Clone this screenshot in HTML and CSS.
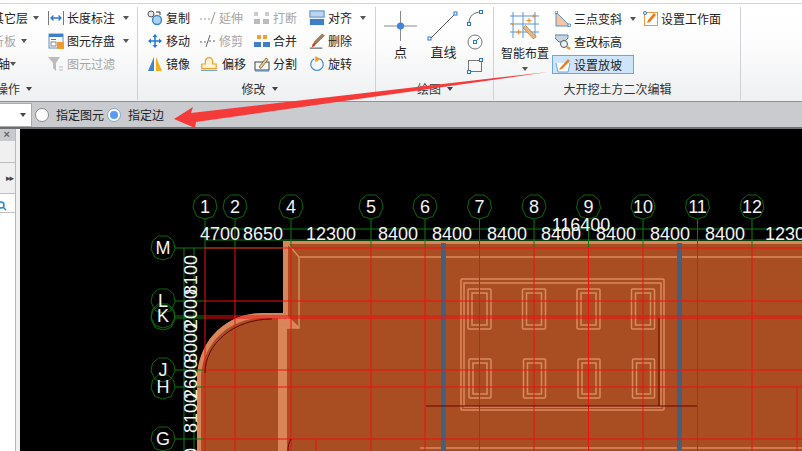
FILE: index.html
```html
<!DOCTYPE html>
<html lang="zh">
<head>
<meta charset="utf-8">
<title>大开挖土方二次编辑</title>
<link rel="stylesheet" href="styles.css">
</head>
<body>
<div class="app">
  <div class="ribbon">
    <section class="group g1">
      <div class="body">
        <div class="col cola">
          <div class="tool"><span>其它层</span><i class="caret"></i></div>
          <div class="tool off"><span>析板</span><i class="caret"></i></div>
          <div class="tool shaft"><span>轴</span><i class="caret"></i></div>
        </div>
        <div class="col colb">
          <div class="tool"><svg class="ic" viewBox="0 0 16 16"><path d="M.5 1v14M15.5 1v14" stroke="#777" fill="none"/><path d="M3 8h10M5.500 5.500 3 8l2.500 2.500M10.500 5.500 13 8l-2.500 2.500" stroke="#2a78c8" stroke-width="1.300" fill="none"/></svg><span>长度标注</span><i class="caret"></i></div>
          <div class="tool"><svg class="ic" viewBox="0 0 16 16"><rect x="1" y="1" width="14" height="14" fill="#fff" stroke="#5a8fc8"/><rect x="1" y="1" width="14" height="3" fill="#3f7fc4"/><rect x="3" y="6" width="5" height="1" fill="#3f7fc4"/><rect x="3" y="9" width="5" height="4" fill="none" stroke="#888"/><rect x="9" y="9" width="7" height="7" fill="#f09a28"/></svg><span>图元存盘</span><i class="caret"></i></div>
          <div class="tool off"><svg class="ic" viewBox="0 0 16 16"><path d="M0 1h12L8 7v8L5 12V7z" fill="#bcbcbc"/><path d="M11 11h4M11 14h4" stroke="#bbb"/></svg><span>图元过滤</span></div>
        </div>
      </div>
      <div class="foot foot-end"><span>操作</span><i class="caret dark"></i></div>
    </section>

    <section class="group g2">
      <div class="body grid4">
        <div class="tool"><svg class="ic" viewBox="0 0 16 16"><circle cx="4" cy="4" r="3" fill="#e8e8e8" stroke="#555"/><circle cx="10" cy="10" r="4.500" fill="#a9d3ee" stroke="#3d86c6" stroke-width="1.400"/><path d="M9 2h4v3" stroke="#333" fill="none"/></svg><span>复制</span></div>
        <div class="tool off"><svg class="ic" viewBox="0 0 16 16"><path d="M0 9h2M4 9h2M8 9h2" stroke="#999"/><path d="M11 14 15 2" stroke="#999"/></svg><span>延伸</span></div>
        <div class="tool off"><svg class="ic" viewBox="0 0 16 16"><rect x="0" y="9" width="6" height="5" fill="#bbb"/><rect x="9" y="9" width="6" height="5" fill="#bbb"/><rect x="0" y="2" width="4" height="4" fill="#ccc"/><rect x="11" y="2" width="4" height="4" fill="#ccc"/></svg><span>打断</span></div>
        <div class="tool"><svg class="ic big" viewBox="0 0 18 18"><rect x="1" y="1" width="16" height="7" fill="#bcd6f2" stroke="#3f7fc4"/><rect x="1" y="10" width="16" height="7" fill="#3f7fc4"/></svg><span>对齐</span><i class="caret"></i></div>

        <div class="tool"><svg class="ic" viewBox="0 0 16 16"><path d="M8 1 5.500 4h5zM8 15l-2.500-3h5zM1 8l3-2.500v5zM15 8l-3-2.500v5z" fill="#1f78d1"/><path d="M8 4v8M4 8h8" stroke="#1f78d1" stroke-width="1.500"/></svg><span>移动</span></div>
        <div class="tool off"><svg class="ic" viewBox="0 0 16 16"><path d="M0 9h2M4 9h2M9 8h2M13 8h2" stroke="#666"/><path d="M6 14 10 2" stroke="#666"/></svg><span>修剪</span></div>
        <div class="tool"><svg class="ic" viewBox="0 0 16 16"><rect x="0" y="9" width="7" height="5" fill="#3f7fc4"/><rect x="9" y="9" width="7" height="5" fill="#3f7fc4"/><rect x="3" y="2" width="4" height="4" fill="#f2a12e"/><rect x="9" y="2" width="4" height="4" fill="#f2a12e"/></svg><span>合并</span></div>
        <div class="tool"><svg class="ic big" viewBox="0 0 18 18"><path d="M6 10 15 1l2 2-9 9z" fill="#a9825c" stroke="#5b4a3a" stroke-width=".7"/><path d="M6 10l2 2-2 3-3 1 1-3z" fill="#c0451f"/><path d="M1 17h14" stroke="#333"/></svg><span>删除</span></div>

        <div class="tool"><svg class="ic" viewBox="0 0 16 16"><path d="M7 1v14H1z" fill="#3f86cf"/><path d="M9 1v14h6z" fill="#f2b01e"/></svg><span>镜像</span></div>
        <div class="tool"><svg class="ic wide" viewBox="0 0 20 16"><path d="M2 13V8h4V5a4 4 0 0 1 8 0v3h4v5z" fill="#fff3dc" stroke="#eda21f" stroke-width="1.300"/><path d="M1 15h18" stroke="#3f86cf"/></svg><span>偏移</span></div>
        <div class="tool"><svg class="ic" viewBox="0 0 16 16"><rect x="1" y="6" width="14" height="8" fill="none" stroke="#444"/><path d="M5 11 12 2l2 1.500L7 12.500z" fill="#f3c66b" stroke="#555" stroke-width=".7"/><path d="M1 15h14" stroke="#3f86cf"/></svg><span>分割</span></div>
        <div class="tool"><svg class="ic big" viewBox="0 0 18 18"><path d="M6 3a7 7 0 1 0 6 0" fill="none" stroke="#3f86cf" stroke-width="1.300"/><path d="M7 0v7l6-3.500z" fill="#f09a28"/></svg><span>旋转</span></div>
      </div>
      <div class="foot foot-g2"><span>修改</span><i class="caret dark"></i></div>
    </section>

    <section class="group g3">
      <div class="body draw">
        <div class="bigtool pt"><svg class="draw-ic" viewBox="0 0 33 30"><path d="M16.500 0v30M0 15h33" stroke="#8a8a8a"/><circle cx="16.500" cy="15" r="3.600" fill="#3f86d8"/></svg><span>点</span></div>
        <div class="bigtool ln"><svg class="draw-ic" viewBox="0 0 33 30"><path d="M3 28 28 3" stroke="#555" fill="none"/><rect x="1" y="26" width="3" height="3" fill="#fff" stroke="#2a78c8"/><rect x="27" y="1" width="3" height="3" fill="#fff" stroke="#2a78c8"/></svg><span>直线</span></div>
        <div class="mini">
          <svg class="mini-ic" viewBox="0 0 16 16"><path d="M2 13C2 6 7 2 14 2" fill="none" stroke="#666"/><rect x="0.500" y="12.500" width="3" height="3" fill="#fff" stroke="#2a78c8"/><rect x="12.500" y="0.500" width="3" height="3" fill="#fff" stroke="#2a78c8"/></svg>
          <svg class="mini-ic" viewBox="0 0 16 16"><circle cx="8" cy="8" r="7" fill="none" stroke="#777"/><path d="M8 8l4-4" stroke="#666"/><rect x="6.500" y="6.500" width="3" height="3" fill="#fff" stroke="#2a78c8"/></svg>
          <svg class="mini-ic" viewBox="0 0 16 16"><rect x="1.500" y="2.500" width="13" height="11" fill="none" stroke="#777"/><rect x="0.500" y="12.500" width="3" height="3" fill="#fff" stroke="#2a78c8"/><rect x="12.500" y="0.500" width="3" height="3" fill="#fff" stroke="#2a78c8"/></svg>
        </div>
      </div>
      <div class="foot"><span>绘图</span><i class="caret dark"></i></div>
    </section>

    <section class="group g4">
      <div class="body smart">
        <div class="bigtool sm"><svg class="smart-ic" viewBox="0 0 30 30"><path d="M3 1v26M13 1v26M25 1v26M0 5h29M0 13h29M0 21h29" stroke="#5a98d8" fill="none"/><path d="M1 12l3 3M6 21h5M8.500 18.500v5M19 7v5M16.500 9.500h5M24 3v4M22 5h4" stroke="#ee8a2c" fill="none"/><path d="M13 17l2.500-2.500L26 25.500 23.500 28z" fill="#e9b77e" stroke="#a8713f" stroke-width=".7"/></svg><span>智能布置</span><i class="caret"></i></div>
        <div class="col colc">
          <div class="tool tp"><svg class="ic" viewBox="0 0 16 16"><path d="M1 1v14h14z" fill="#f6c6a0" stroke="#5a8fc8"/><rect x="0" y="0" width="2.500" height="2.500" fill="#fff" stroke="#2a78c8" stroke-width=".7"/><rect x="13" y="13" width="2.500" height="2.500" fill="#fff" stroke="#2a78c8" stroke-width=".7"/></svg><span>三点变斜</span><i class="caret"></i></div>
          <div class="tool tp"><svg class="ic" viewBox="0 0 16 16"><path d="M0 1h13v3L9 8H4L0 4z" fill="#c6d3e2" stroke="#5a80a8"/><circle cx="9" cy="10" r="3.500" fill="#e8f2fb" stroke="#555"/><path d="M12 13l3 2" stroke="#f09a28" stroke-width="2.500"/></svg><span>查改标高</span></div>
          <div class="tool tp active"><svg class="ic" viewBox="0 0 16 16"><path d="M1 6l2 9h10l2-9" fill="#fff" stroke="#6ea6d8"/><path d="M5 11l8-9 2 2-8 8-3 1z" fill="#ee7d22"/></svg><span>设置放坡</span></div>
        </div>
        <div class="col cold">
          <div class="tool"><svg class="ic" viewBox="0 0 16 16"><rect x="1.500" y="1.500" width="13" height="13" fill="#fff" stroke="#e99a3a"/><path d="M4 12l1-3 6-7 2 2-6 7z" fill="#ee7d22"/><circle cx="2" cy="2" r="1.500" fill="#fff" stroke="#2a78c8"/></svg><span>设置工作面</span></div>
        </div>
      </div>
      <div class="foot"><span>大开挖土方二次编辑</span></div>
    </section>
  </div>

  <div class="options">
    <div class="combo"><i class="caret dark"></i></div>
    <label class="radio"><i class="dot"></i><span>指定图元</span></label>
    <label class="radio on"><i class="dot"></i><span>指定边</span></label>
  </div>

  <div class="main">
    <aside class="side">
      <div class="side-panel">
        <div class="s-head">×</div>
        <div class="s-a"></div>
        <div class="s-b">▸▸</div>
        <div class="s-c"><svg class="s-search" viewBox="0 0 10 10"><circle cx="3" cy="4" r="3" fill="none" stroke="#2a86c8" stroke-width="1.500"/><path d="M5 6l3 3" stroke="#2a86c8" stroke-width="1.500"/></svg></div>
        <div class="s-d"></div>
      </div>
    </aside>
    <svg class="canvas" viewBox="20 129 782 322">
      <defs>
        <polygon id="bubble" points="-4.500,-12 4.500,-12 10.500,-7 12,1 8,9.500 0,12 -8,9.500 -12,1 -10.500,-7"/>
        <g id="pile1" class="lite">
          <rect x="468" y="289" width="23" height="40" rx="1"/>
          <rect x="472" y="293" width="15" height="32"/>
        </g>
        <g id="pile2" class="lite">
          <rect x="469" y="359" width="22" height="39" rx="1"/>
          <rect x="473" y="363" width="14" height="31"/>
        </g>
      </defs>

      <path class="soil" d="M283 241H802V451H197V380C197 342 225 313 263 313H283Z"/>
      <path class="band" d="M197 451V380C197 342 225 313 263 313H283V241H802V244H288V317L299 328H287V451H278V318H263C228 318 201 345 201 380V451Z"/>
      <g class="lite">
        <path d="M288 244 299 257V328H283M299 257H802M288 317 299 328M420 448H802"/>
        <rect x="461" y="279" width="203" height="131" rx="1"/>
        <rect x="464" y="283" width="197" height="124"/>
      </g>
      <use href="#pile1"/><use href="#pile1" x="54.500"/><use href="#pile1" x="109"/><use href="#pile1" x="163.500"/>
      <use href="#pile2"/><use href="#pile2" x="54.500"/><use href="#pile2" x="109"/><use href="#pile2" x="163.500"/>
      <rect class="strip" x="441" y="243" width="5" height="208"/>
      <rect class="strip" x="677" y="243" width="5" height="208"/>

      <path class="axis" d="M205 219V248M235 219V248M291 219V248M371 219V248M425 219V248M479.500 219V248M534 219V248M588.500 219V248M643 219V248M697.500 219V248M752 219V248M205 229H802M205 240H802M175 248H283M175 301H205M175 316H205M175 318H205M175 370H205M175 387H205M175 439H205M184 248V451M194 248V451"/>
      <path class="grid" d="M205 248V451M235 248V451M291 248V451M371 248V451M425 248V451M479.500 248V451M534 248V451M588.500 248V451M643 248V451M697.500 248V451M752 248V451M205 248H802M205 301H802M205 316H802M205 318H802M205 370H802M205 387H802M205 439H802M797 387V451M316 439V451"/>
      <path class="cut" d="M426 406H697M659 318V406M272 319C232 319 205 345 205 373M288 451C288 446 289 442 291 439"/>

      <g class="ring">
        <use href="#bubble" x="205" y="207"/><use href="#bubble" x="235" y="207"/><use href="#bubble" x="291" y="207"/><use href="#bubble" x="371" y="207"/><use href="#bubble" x="425" y="207"/><use href="#bubble" x="479.500" y="207"/><use href="#bubble" x="534" y="207"/><use href="#bubble" x="588.500" y="207"/><use href="#bubble" x="643" y="207"/><use href="#bubble" x="697.500" y="207"/><use href="#bubble" x="752" y="207"/>
        <use href="#bubble" x="163" y="248"/><use href="#bubble" x="163" y="301"/><use href="#bubble" x="163" y="316"/><use href="#bubble" x="163" y="318"/><use href="#bubble" x="163" y="370"/><use href="#bubble" x="163" y="387"/><use href="#bubble" x="163" y="439"/>
      </g>
      <g class="lab">
        <text x="205" y="213">1</text><text x="235" y="213">2</text><text x="291" y="213">4</text><text x="371" y="213">5</text><text x="425" y="213">6</text><text x="479.500" y="213">7</text><text x="534" y="213">8</text><text x="588.500" y="213">9</text><text x="643" y="213">10</text><text x="697.500" y="213">11</text><text x="752" y="213">12</text>
        <text x="163" y="254">M</text><text x="163" y="307">L</text><text x="163" y="322">K</text><text x="163" y="376">J</text><text x="163" y="393">H</text><text x="163" y="445">G</text>
        <text x="220" y="240">4700</text><text x="263" y="240">8650</text><text x="331" y="240">12300</text><text x="398" y="240">8400</text><text x="452" y="240">8400</text><text x="507" y="240">8400</text><text x="561" y="240">8400</text><text x="616" y="240">8400</text><text x="670" y="240">8400</text><text x="725" y="240">8400</text><text x="790" y="240">12300</text>
        <text x="581" y="231">116400</text>
        <text transform="translate(197 275) rotate(-90)">8100</text>
        <text transform="translate(197 309) rotate(-90)">2000</text>
        <text transform="translate(197 343) rotate(-90)">8000</text>
        <text transform="translate(197 379) rotate(-90)">2600</text>
        <text transform="translate(197 413) rotate(-90)">8100</text>
        <text transform="translate(197 468) rotate(-90)">8100</text>
      </g>
    </svg>
  </div>

  <svg class="arrow" viewBox="0 0 802 451"><path d="M174 119 193 107 191 113 548 72 196 122 195 128Z"/></svg>
</div>
</body>
</html>
```
FILE: styles.css
```css
* { box-sizing: border-box; }
html, body { margin: 0; padding: 0; }
body { width: 802px; height: 451px; overflow: hidden; background: #000; font: 12px/16px "Noto Sans CJK SC", "Liberation Sans", sans-serif; color: #222; }
.app { position: relative; width: 802px; height: 451px; display: flex; flex-direction: column; overflow: hidden; }

.ribbon { height: 102px; flex: none; display: flex; padding-top: 3px; background: linear-gradient(#fff 0, #fff 3px, #fdfdfd 40%, #eef0f1 100%); border-bottom: 1px solid #8e9094; }
.group { height: 98px; padding-top: 1px; border-top: 1px solid #d4d4d4; display: flex; flex-direction: column; overflow: hidden; position: relative; flex: none; }
.group::after { content: ""; position: absolute; right: 0; top: 3px; bottom: 1px; width: 1px; background: #cfd2d4; }
.g1 { width: 138px; }
.g2 { width: 238px; }
.g3 { width: 118px; }
.g4 { width: 247px; }
.ribbon::after { content: ""; flex: 1; border-top: 1px solid #d4d4d4; }

.body { height: 76px; padding-top: 1px; display: flex; }
.foot { flex: 1; display: flex; align-items: center; justify-content: center; gap: 6px; padding-bottom: 4px; color: #333; }
.foot-end { justify-content: flex-start; margin-left: -4px; }
.foot-g2 { padding-left: 5px; }

.caret { display: inline-block; width: 0; height: 0; border: 3.500px solid transparent; border-top: 4px solid #555; border-bottom: 0; flex: none; }
.caret.dark { border-top-color: #444; }

.col { display: flex; flex-direction: column; }
.tool { height: 23px; display: flex; align-items: center; gap: 3px; white-space: nowrap; flex: none; }
.tool .caret { margin-left: 5px; }
.off { color: #a6a6a6; }
.ic { width: 16px; height: 16px; flex: none; }
.ic.big { width: 16px; height: 18px; }
.ic.wide { width: 18px; height: 16px; margin-right: 1px; }

.g1 .body { justify-content: flex-start; }
.cola { width: 48px; margin-left: -8px; margin-right: 8px; flex: none; }
.cola .tool { gap: 0; }
.cola .shaft { padding-left: 6px; }
.cola .shaft .caret { margin-left: 0; }
.colb .tool { gap: 3px; }

.grid4 { display: grid; grid-template-columns: 53px 54px 55px 60px; grid-auto-rows: 23px; padding-left: 9px; }

.draw { position: relative; padding-left: 8px; padding-top: 6px; }
.bigtool { display: flex; flex-direction: column; align-items: center; flex: none; }
.pt { width: 33px; }
.ln { width: 33px; margin-left: 10px; }
.draw-ic { width: 33px; height: 30px; display: block; margin-bottom: 2px; }
.bigtool span { font-size: 13px; line-height: 18px; color: #222; }
.mini { display: flex; flex-direction: column; gap: 8px; margin-left: 7px; margin-top: -1px; }
.mini-ic { width: 16px; height: 16px; display: block; }

.smart { padding-top: 2px; }
.sm { width: 58px; padding-left: 4px; padding-top: 4px; }
.smart-ic { width: 30px; height: 30px; display: block; margin-bottom: 4px; }
.sm span { font-size: 12px; line-height: 16px; }
.sm .caret { margin-top: 6px; }
.colc { width: 91px; }
.tp { padding-left: 3px; width: 82px; }
.tp.active { height: 19px; margin: 2px 0; background: #cde4fb; border: 1px solid #6ea6e0; padding-left: 2px; }
.cold { width: 90px; }
.cold .tool { gap: 2px; }

.options { height: 27px; flex: none; display: flex; align-items: center; background: #c9cbce; border-bottom: 2px solid #6e7074; padding-top: 1px; color: #222; }
.combo { width: 32px; height: 24px; background: #fff; border: 1px solid #a9abae; border-left: 0; display: flex; align-items: center; justify-content: flex-end; padding-right: 5px; flex: none; }
.radio { display: flex; align-items: center; gap: 7px; margin-left: 3px; }
.radio span { width: 48px; }
.dot { width: 14px; height: 14px; border-radius: 50%; background: #fff; border: 1px solid #8a8a8a; display: flex; align-items: center; justify-content: center; flex: none; }
.radio.on .dot { border-color: #7fa7d6; }
.radio.on .dot::after { content: ""; width: 8px; height: 8px; border-radius: 50%; background: #5a9cf0; }

.main { flex: 1; min-height: 0; display: flex; background: #000; }
.side { width: 20px; flex: none; background: #f0f0f0; }
.side-panel { width: 16px; height: 100%; border-right: 1px solid #b8b8b8; display: flex; flex-direction: column; background: #fff; }
.s-head { height: 12px; background: #c8cacd; color: #666; font: 700 11px/11px "Liberation Sans", sans-serif; text-align: right; padding-right: 5px; }
.s-a { height: 22px; background: #f0f0f0; border-bottom: 1px solid #c0c0c0; }
.s-b { height: 31px; background: #f0f0f0; border-bottom: 1px solid #c0c0c0; font: 9px/30px "DejaVu Sans", sans-serif; color: #444; letter-spacing: -1px; text-align: right; padding-right: 2px; }
.s-c { height: 19px; border-bottom: 1px solid #c0c0c0; overflow: hidden; }
.s-search { width: 10px; height: 10px; display: block; margin: 7px 0 0 -2px; }
.s-d { flex: 1; }

.canvas { width: 782px; height: 322px; display: block; flex: none; }
.soil { fill: #a84e22; }
.band { fill: #d9845a; }
.lite { fill: none; stroke: #d98a5f; stroke-width: 1.500; }
.strip { fill: #44607f; }
.axis { fill: none; stroke: #0c7a12; stroke-width: 1; }
.grid { fill: none; stroke: #f01010; stroke-width: 1; }
.cut { fill: none; stroke: #6b0000; stroke-width: 1; }
.ring { fill: none; stroke: #0b6a0b; stroke-width: 1; }
.lab { fill: #f4f4f4; font: 18px "Liberation Sans", sans-serif; text-anchor: middle; }

.arrow { position: absolute; left: 0; top: 0; width: 802px; height: 451px; pointer-events: none; }
.arrow path { fill: #f53a3a; }
```
